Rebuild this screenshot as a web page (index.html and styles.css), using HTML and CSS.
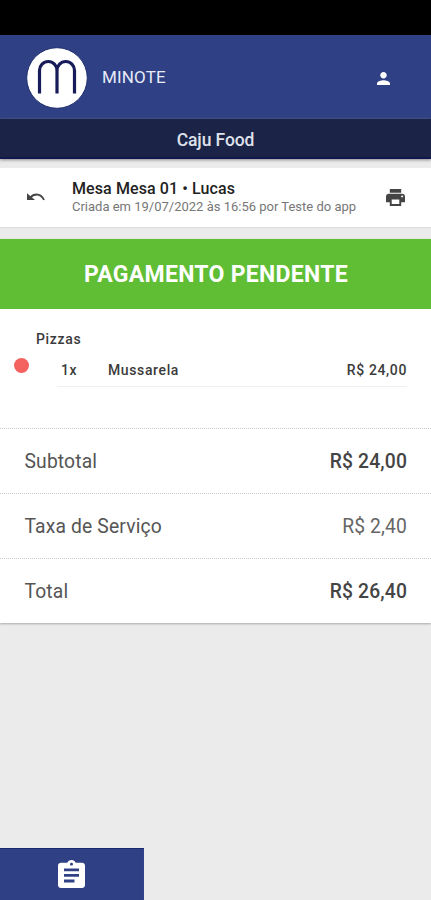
FILE: index.html
```html
<!DOCTYPE html>
<html lang="pt-BR">
<head>
<meta charset="utf-8">
<title>Minote</title>
<link rel="stylesheet" href="styles.css">
</head>
<body>
<div class="app">
  <div class="status-bar"></div>
  <header class="header">
    <svg class="logo" viewBox="0 0 62 62" aria-hidden="true">
      <circle cx="31" cy="31" r="30.300" fill="#fff" stroke="#202f70" stroke-width="1"/>
      <path d="M13.500 46.500V23.500a8.750 9 0 0 1 17.500 0V46.500M31 23.500a8.750 9 0 0 1 17.500 0V46.500" fill="none" stroke="#171b59" stroke-width="3.200"/>
    </svg>
    <span class="brand">MINOTE</span>
    <svg class="user" viewBox="4 4 16 16" aria-hidden="true"><path fill="#fff" d="M12 12c2.210 0 4-1.790 4-4s-1.790-4-4-4-4 1.790-4 4 1.790 4 4 4zm0 2c-2.670 0-8 1.340-8 4v2h16v-2c0-2.660-5.330-4-8-4z"/></svg>
  </header>
  <div class="store"><span>Caju Food</span></div>
  <section class="order">
    <svg class="undo" viewBox="0 0 20 10" aria-hidden="true"><path d="M1 1.200V8h8z" fill="#444"/><path d="M4.500 5.500Q7 2.500 10.500 2.500Q15.500 2.500 18 8" fill="none" stroke="#444" stroke-width="1.800"/></svg>
    <div class="order-text">
      <span class="order-title">Mesa Mesa 01 • Lucas</span>
      <span class="order-sub">Criada em 19/07/2022 às 16:56 por Teste do app</span>
    </div>
    <svg class="print" viewBox="2 3 20 18" preserveAspectRatio="none" aria-hidden="true"><path fill="#444" d="M19 8H5c-1.660 0-3 1.340-3 3v6h4v4h12v-4h4v-6c0-1.660-1.340-3-3-3zm-3 11H8v-5h8v5zm3-7c-.55 0-1-.45-1-1s.45-1 1-1 1 .45 1 1-.45 1-1 1zm-1-9H6v4h12V3z"/></svg>
  </section>
  <section class="bill">
    <div class="banner"><span>PAGAMENTO PENDENTE</span></div>
    <div class="items">
      <h2 class="category">Pizzas</h2>
      <div class="item">
        <i class="dot"></i>
        <div class="item-line"><span class="qty">1x</span><span class="name">Mussarela</span><span class="price">R$ 24,00</span></div>
      </div>
    </div>
    <div class="row"><span>Subtotal</span><span class="strong">R$ 24,00</span></div>
    <div class="row"><span>Taxa de Serviço</span><span class="light">R$ 2,40</span></div>
    <div class="row"><span>Total</span><span class="strong">R$ 26,40</span></div>
  </section>
  <footer class="tab">
    <svg viewBox="3 1 18 20" preserveAspectRatio="none" aria-hidden="true"><path fill="#fff" d="M19 3h-4.180C14.400 1.840 13.300 1 12 1c-1.300 0-2.400.84-2.820 2H5c-1.100 0-2 .9-2 2v14c0 1.100.9 2 2 2h14c1.100 0 2-.9 2-2V5c0-1.100-.9-2-2-2zm-7 0c.55 0 1 .45 1 1s-.45 1-1 1-1-.45-1-1 .45-1 1-1zm2 14H7v-2h7v2zm3-4H7v-2h10v2zm0-4H7V7h10v2z"/></svg>
  </footer>
</div>
</body>
</html>
```

FILE: styles.css
```css
* { box-sizing: border-box; }
body { margin: 0; font-family: Roboto, "Liberation Sans", sans-serif; color: #555; }
.app { width: 431px; height: 900px; display: flex; flex-direction: column; background: #ebebeb; overflow: hidden; }
.app span { white-space: nowrap; }
.status-bar { height: 35px; background: #000; flex: none; }
.header { height: 84px; flex: none; display: flex; align-items: center; padding: 2px 41px 0 26px; background: #2f4084; color: #e8ebf7; }
.logo { width: 62px; height: 62px; }
.brand { margin: -2px auto 0 14px; font-size: 17px; line-height: 20px; letter-spacing: .15px; }
.user { width: 13px; height: 13px; }
.store { height: 40px; flex: none; display: flex; justify-content: center; align-items: center; background: #1b2346; border-bottom: 2px solid #111850; color: #dfe1eb; font-size: 17.5px; font-weight: 500; letter-spacing: -.1px; padding-top: 3px; box-shadow: 0 1px 3px #888; }
.order { height: 59px; flex: none; margin: 9px 0 12px; display: flex; align-items: center; padding: 0 26px; background: #fff; box-shadow: 0 1px 1px #ddd; }
.undo { width: 20px; height: 10px; margin-top: -1px; }
.order-text { margin: -2px auto 0 26px; display: flex; flex-direction: column; }
.order-title { font-size: 16px; line-height: 19px; font-weight: 500; color: #222; letter-spacing: .1px; }
.order-sub { font-size: 13px; line-height: 17px; color: #777; }
.print { width: 19px; height: 17px; margin-top: -1px; }
.bill { flex: none; background: #fff; box-shadow: 0 1px 2px #aaa; }
.banner { height: 70px; display: flex; align-items: center; justify-content: center; background: #5fbe34; color: #fff; font-size: 23px; font-weight: 700; letter-spacing: .28px; padding: 1px 0 0 1px; }
.items { height: 119px; padding: 21px 24px 0 14px; color: #3b3b3b; font-weight: 500; }
.category { margin: 0 0 0 22px; font-size: 14px; line-height: 18px; font-weight: 500; letter-spacing: .65px; }
.item { display: flex; align-items: flex-start; padding-top: 9px; }
.dot { width: 15px; height: 15px; border-radius: 50%; background: #f3625f; margin: 1px 28px 0 0; }
.item-line { flex: 1; height: 30px; display: flex; align-items: center; border-bottom: 1px solid #eee; font-size: 14px; letter-spacing: .62px; padding: 0 0 3px 4px; }
.qty { width: 47px; }
.price { margin: 0 0 0 auto; }
.row { height: 65px; display: flex; align-items: center; justify-content: space-between; padding: 1px 24px 0 24.5px; border-top: 1px dotted #ccc; font-size: 19.3px; letter-spacing: .15px; }
.strong { font-weight: 500; color: #444; font-size: 19.3px; }
.light { color: #666; }
.tab { width: 144px; height: 52px; margin-top: auto; display: flex; align-items: center; justify-content: center; background: #2f4084; border-top: 1px solid #1b286e; border-right: 1px solid #33418c; }
.tab svg { width: 27px; height: 28px; margin-top: -1px; }
```
